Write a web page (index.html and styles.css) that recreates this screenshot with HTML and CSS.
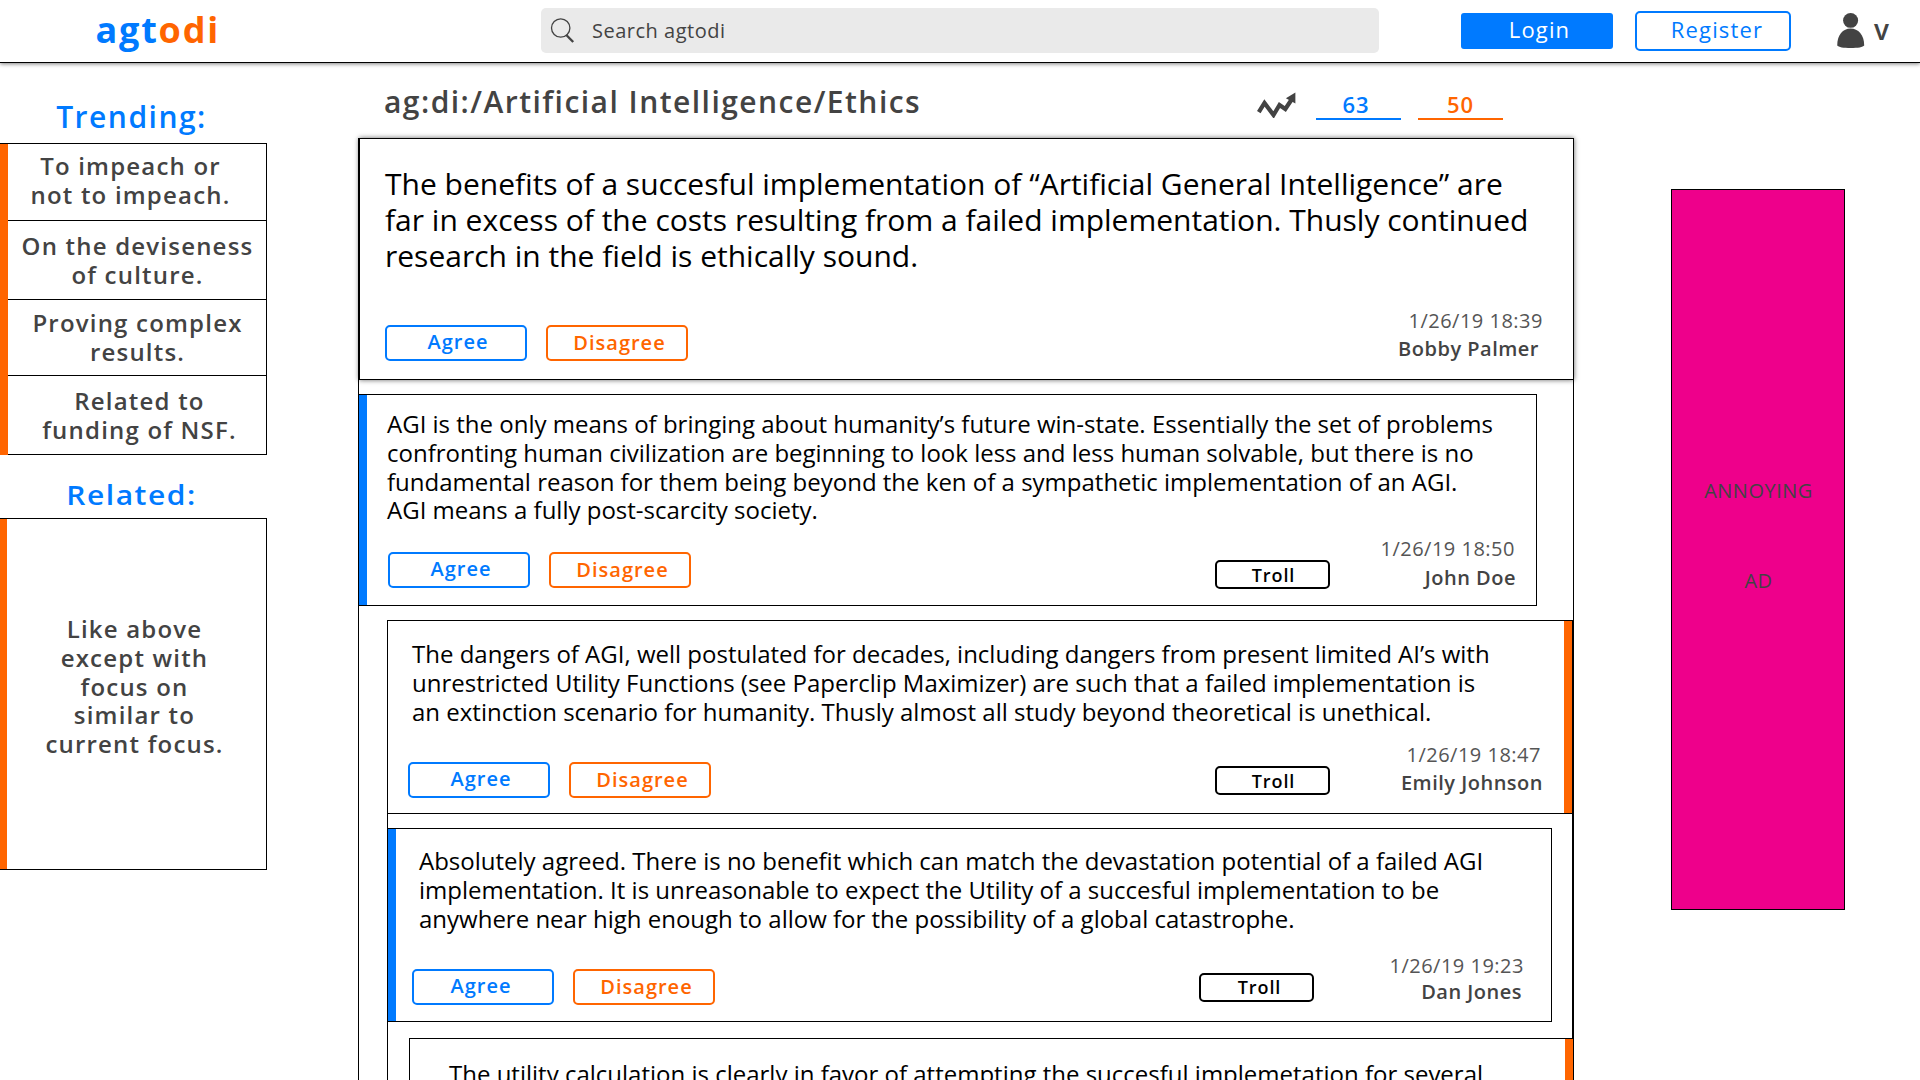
FILE: index.html
```
<!DOCTYPE html>
<html lang="en">
<head>
<meta charset="utf-8">
<title>agtodi</title>
<link rel="stylesheet" href="styles.css">
</head>
<body>
<header class="topbar">
  <a class="logo"><span class="logo-ag">agt</span><span class="logo-di">odi</span></a>
  <div class="search">
    <svg class="search-icon" width="26" height="30" viewBox="0 0 26 30" fill="none" stroke="#434343">
      <ellipse cx="10.7" cy="11" rx="9.2" ry="9.2" stroke-width="1.3"/>
      <path d="M16.3 18 L23.2 25" stroke-width="2.4"/>
    </svg>
    <span class="search-text">Search agtodi</span>
  </div>
  <a class="login">Login</a>
  <a class="register">Register</a>
  <svg class="user-icon" width="28" height="37" viewBox="0 0 28 37" fill="#434343">
    <ellipse cx="13.6" cy="8.4" rx="7.5" ry="7.4"/>
    <path d="M0.2 33.5 C0.2 23 6 16.6 13.6 16.6 C21.2 16.6 27.2 23 27.2 33.5 C26 35.2 21 36 13.6 36 C6.500 36 1.500 35.2 0.2 33.5Z"/>
  </svg>
  <span class="caret">v</span>
</header>

<div class="page">
  <aside class="sidebar">
    <h2 class="side-title">Trending:</h2>
    <ul class="trending">
      <li class="topic topic-impeach">To impeach or<br>not to impeach.</li>
      <li class="topic topic-culture">On the deviseness<br>of culture.</li>
      <li class="topic topic-proof">Proving complex<br>results.</li>
      <li class="topic topic-nsf">Related to<br>funding of NSF.</li>
    </ul>
    <h2 class="side-title side-title-related">Related:</h2>
    <div class="related">Like above<br>except with<br>focus on<br>similar to<br>current focus.</div>
  </aside>

  <main class="content">
    <div class="crumbs">
      <h1 class="path">ag:di:/Artificial Intelligence/Ethics</h1>
      <svg class="trend-icon" width="40" height="26" viewBox="0 0 40 26">
        <path d="M1.800 20.200 L7.500 11 L16.500 23 L22.500 13 L28.300 17 L35 7" fill="none" stroke="#434343" stroke-width="4.200"/>
        <path d="M38.400 .5 L28.900 6.300 L38.400 11.500Z" fill="#434343"/>
      </svg>
      <span class="count count-agree">63</span>
      <span class="count count-disagree">50</span>
    </div>

    <div class="thread">
      <article class="post post-main">
        <p class="text">The benefits of a succesful implementation of “Artificial General Intelligence” are<br>far in excess of the costs resulting from a failed implementation. Thusly continued<br>research in the field is ethically sound.</p>
        <footer class="foot">
          <a class="btn agree">Agree</a><a class="btn disagree">Disagree</a>
          <div class="meta"><time class="date">1/26/19 18:39</time><span class="name">Bobby Palmer</span></div>
        </footer>
      </article>

      <article class="post post-john">
        <p class="text">AGI is the only means of bringing about humanity’s future win-state. Essentially the set of problems<br>confronting human civilization are beginning to look less and less human solvable, but there is no<br>fundamental reason for them being beyond the ken of a sympathetic implementation of an AGI.<br>AGI means a fully post-scarcity society.</p>
        <footer class="foot">
          <a class="btn agree">Agree</a><a class="btn disagree">Disagree</a><a class="troll">Troll</a>
          <div class="meta"><time class="date">1/26/19 18:50</time><span class="name">John Doe</span></div>
        </footer>
      </article>

      <section class="branch">
        <article class="post post-emily">
          <p class="text">The dangers of AGI, well postulated for decades, including dangers from present limited AI’s with<br>unrestricted Utility Functions (see Paperclip Maximizer) are such that a failed implementation is<br>an extinction scenario for humanity. Thusly almost all study beyond theoretical is unethical.</p>
          <footer class="foot">
            <a class="btn agree">Agree</a><a class="btn disagree">Disagree</a><a class="troll">Troll</a>
            <div class="meta"><time class="date">1/26/19 18:47</time><span class="name">Emily Johnson</span></div>
          </footer>
        </article>

        <article class="post post-dan">
          <p class="text">Absolutely agreed. There is no benefit which can match the devastation potential of a failed AGI<br>implementation. It is unreasonable to expect the Utility of a succesful implementation to be<br>anywhere near high enough to allow for the possibility of a global catastrophe.</p>
          <footer class="foot">
            <a class="btn agree">Agree</a><a class="btn disagree">Disagree</a><a class="troll">Troll</a>
            <div class="meta"><time class="date">1/26/19 19:23</time><span class="name">Dan Jones</span></div>
          </footer>
        </article>

        <article class="post post-last">
          <p class="text">The utility calculation is clearly in favor of attempting the succesful implemetation for several</p>
        </article>
      </section>
    </div>
  </main>

  <aside class="ad"><span>ANNOYING</span><span>AD</span></aside>
</div>
</body>
</html>
```
FILE: styles.css
```
* { box-sizing: border-box; }

body {
  margin: 0;
  width: 1920px;
  height: 1080px;
  overflow: hidden;
  display: flex;
  flex-direction: column;
  background: #fff;
  color: #434343;
  font-family: "Open Sans", "Noto Sans", sans-serif;
}

h1, h2, p, ul { margin: 0; padding: 0; }
ul { list-style: none; }

/* top bar */
.topbar {
  flex: none;
  display: flex;
  align-items: flex-start;
  height: 63px;
  padding-left: 95px;
  border-bottom: 1px solid #000;
  box-shadow: 0 1px 4px rgba(0, 0, 0, .5);
}
.logo {
  width: 446px;
  padding: 8px 0 0 .5px;
  font-size: 36px;
  font-weight: 700;
  line-height: 44px;
  letter-spacing: 1.8px;
}
.logo-ag { color: #007aff; }
.logo-di { color: #ff6500; }
.search {
  display: flex;
  width: 838px;
  height: 45px;
  margin-top: 8px;
  padding-left: 9px;
  border-radius: 5px;
  background: #eaeaea;
}
.search-icon { margin-top: 9px; }
.search-text {
  padding-left: 16px;
  font-size: 20px;
  line-height: 45px;
  letter-spacing: .5px;
}
.login, .register {
  font-size: 22px;
  letter-spacing: 1.15px;
  text-align: center;
}
.login {
  width: 152px;
  height: 36px;
  margin: 13px 0 0 82px;
  padding-left: 5px;
  border-radius: 3px;
  background: #007aff;
  color: #fff;
  line-height: 33px;
}
.register {
  width: 156px;
  height: 40px;
  margin: 11px 0 0 22px;
  padding-left: 8px;
  border: 2px solid #007aff;
  border-radius: 5px;
  color: #007aff;
  line-height: 33px;
}
.user-icon { margin: 12px 0 0 46px; }
.caret {
  margin: 13px 0 0 9px;
  font-size: 28px;
  font-weight: 600;
  line-height: 32px;
}

/* columns */
.page {
  flex: 1;
  min-height: 0;
  display: flex;
  align-items: flex-start;
}

/* left column */
.sidebar { width: 267px; padding-top: 36px; }
.side-title {
  width: 263px;
  height: 44px;
  color: #007aff;
  font-size: 30px;
  font-weight: 600;
  line-height: 36px;
  letter-spacing: 1.5px;
  text-align: center;
}
.side-title-related {
  height: 42px;
  margin-top: 21px;
  transform: scaleY(.89);
  transform-origin: 0 30px;
}
.trending, .related {
  border: solid #000;
  font-size: 24px;
  font-weight: 600;
  line-height: 28.8px;
  letter-spacing: 1.2px;
  text-align: center;
}
.trending {
  padding-left: 8px;
  border-width: 1px 1px 0 0;
  background: linear-gradient(#ff6500, #ff6500) 0 0 / 8px 100% no-repeat border-box;
}
.topic { border-bottom: 1px solid #000; }
.topic-impeach { height: 77px; padding: 8px 13px 0 0; }
.topic-culture { height: 79px; padding: 11px 0 0 1px; }
.topic-proof { height: 76px; padding: 9px 0 0 1px; }
.topic-nsf { height: 79px; padding: 11px 0 0 5px; }
.related {
  display: flex;
  align-items: center;
  justify-content: center;
  height: 352px;
  padding: 0 0 14px 3px;
  border-width: 1px 1px 1px 0;
  background: linear-gradient(#ff6500, #ff6500) 0 0 / 7px 100% no-repeat border-box;
}

/* centre column */
.content { width: 1216px; margin-left: 91px; }
.crumbs {
  display: flex;
  align-items: flex-start;
  height: 75px;
  padding-left: 26px;
}
.path {
  width: 873px;
  padding-top: 21px;
  font-size: 30px;
  font-weight: 600;
  line-height: 36px;
  letter-spacing: 1.46px;
}
.trend-icon { margin-top: 29px; }
.count {
  width: 85px;
  height: 38px;
  margin-top: 19px;
  padding-right: 5px;
  font-size: 22px;
  font-weight: 600;
  line-height: 44px;
  letter-spacing: 1px;
  text-align: center;
}
.count-agree { margin-left: 19px; border-bottom: 2px solid #007aff; color: #007aff; }
.count-disagree { margin-left: 17px; padding-right: 0; border-bottom: 2px solid #ff6500; color: #ff6500; }

.thread {
  height: 942px;
  border: solid #000;
  border-width: 0 1px;
}
.post {
  display: flex;
  flex-direction: column;
  justify-content: space-between;
  border: 1px solid #000;
  color: #000;
}
.text {
  font-size: 24px;
  line-height: 28.8px;
  white-space: nowrap;
}
.foot { display: flex; align-items: flex-end; }

.btn {
  width: 142px;
  height: 36px;
  border: 2px solid;
  border-radius: 5px;
  font-size: 20px;
  font-weight: 600;
  letter-spacing: 1px;
  text-align: center;
}
.agree { padding-left: 4px; color: #007aff; line-height: 30px; }
.disagree { margin-left: 19px; padding-left: 5px; color: #ff6500; line-height: 32px; }
.troll {
  width: 115px;
  height: 29px;
  padding-left: 2px;
  border: 2px solid #000;
  border-radius: 5px;
  font-size: 18px;
  font-weight: 600;
  line-height: 26px;
  letter-spacing: .9px;
  text-align: center;
}
.meta {
  display: flex;
  flex-direction: column;
  align-items: flex-end;
  gap: 4px;
  margin-left: auto;
  color: #434343;
  font-size: 20px;
  line-height: 24px;
  letter-spacing: .5px;
}
.date { font-weight: 400; color: #555; }
.name { font-weight: 600; }

.post-main {
  height: 242px;
  margin-right: -1px;
  padding: 27px 30px 18px 25px;
  box-shadow: 0 0 5px rgba(0, 0, 0, .6);
}
.post-main .text { font-size: 30px; line-height: 36px; }
.post-main .meta { margin-bottom: 0; }
.post-main .name { margin-right: 4px; }

.post-john {
  height: 212px;
  margin: 14px 36px 0 0;
  padding: 15px 20px 17px 28px;
  border-left: 0;
  background: linear-gradient(#007aff, #007aff) 0 0 / 8px 100% no-repeat border-box;
}
.post-john .foot { margin-left: 1px; }
.post-john .troll { margin: 0 0 -1px 524px; }
.post-john .meta { gap: 5px; margin-bottom: -2px; }
.post-john .date { margin-right: 1px; }

.branch {
  height: 460px;
  margin: 14px 0 0 28px;
  border: solid #000;
  border-width: 0 1px;
}
.post-emily {
  height: 194px;
  padding: 19px 29px 15px 24px;
  border-left: 0;
  border-right: 0;
  background: linear-gradient(#ff6500, #ff6500) 100% 0 / 8px 100% no-repeat border-box;
}
.post-emily .foot { margin-left: -4px; }
.post-emily .troll { margin: 0 0 3px 504px; }
.post-emily .meta { margin-bottom: 3px; }
.post-emily .date { margin-right: 2px; }

.post-dan {
  height: 194px;
  margin: 14px 20px 0 0;
  padding: 18px 27px 16px 31px;
  border-left: 0;
  background: linear-gradient(#007aff, #007aff) 0 0 / 8px 100% no-repeat border-box;
}
.post-dan .foot { margin-left: -7px; }
.post-dan .agree { padding: 0 4px 0 0; }
.post-dan .troll { margin: 0 0 3px 484px; padding-left: 6px; line-height: 25px; }
.post-dan .meta { gap: 2px; margin-bottom: 1px; }
.post-dan .name { margin-right: 2px; }

.post-last {
  height: 42px;
  margin: 16px -1px 0 21px;
  padding: 21px 0 0 39px;
  border-width: 1px 0 0 1px;
  background: #fff linear-gradient(#ff6500, #ff6500) 100% 0 / 8px 100% no-repeat border-box;
}

/* advertisement */
.ad {
  display: flex;
  flex-direction: column;
  align-items: center;
  width: 174px;
  height: 721px;
  margin: 126px 0 0 97px;
  padding: 256px 0 0 1px;
  border: 1px solid #000;
  background: #ee008b;
  font-size: 20px;
  line-height: 90px;
  letter-spacing: .5px;
}
```
